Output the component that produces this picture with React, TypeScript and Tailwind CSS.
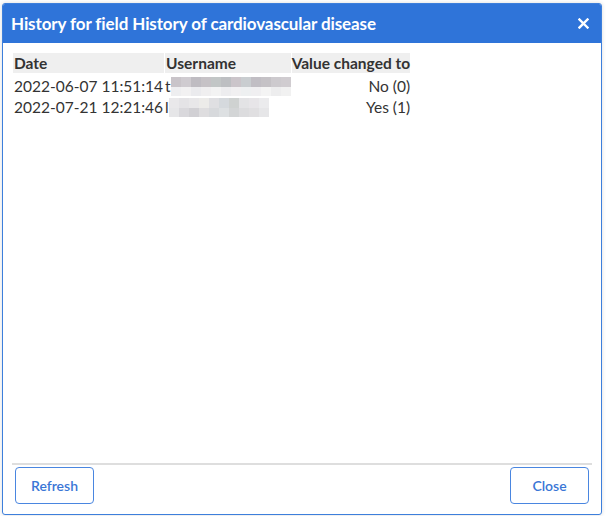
import React from 'react';

const blur1 = ['#c9c4c9', '#cfcbd0', '#bfbcc2', '#c6c2c6', '#c2c6c6', '#bdbfc2', '#cbc5ca', '#c9cdd0', '#c1bec4', '#c5c2c6', '#cdcace', '#d0ccd0'];
const blur1b = ['#eeeef0', '#f2f1f2', '#ebebee', '#f0eff0', '#f3f3f3', '#ededef', '#f1f0f1', '#eef0f1', '#f0eff1', '#f4f4f4', '#ededee', '#f1f1f1'];
const blur2 = ['#e9e8ea', '#e4e3e6', '#e8e7e9', '#ecebe9', '#dfdfe2', '#d5d9dd', '#cfd2d1', '#e3e3e5', '#e7e5e8', '#ebebed'];
const blur2b = ['#e6e6e8', '#d9d8dc', '#d1d0d4', '#dedddf', '#d7d9dc', '#dde0e2', '#d3d5d6', '#dcdcde', '#e0dfe1', '#e6e6e8'];

function Blurred({ top, bottom, lead }: { top: string[]; bottom: string[]; lead: string }) {
  return (
    <div className="flex items-center h-[21px]">
      <span>{lead}</span>
      <div className="flex flex-col">
        <div className="flex">
          {top.map((c, i) => (
            <div key={i} className="w-[10px] h-[10px]" style={{ backgroundColor: c }} />
          ))}
        </div>
        <div className="flex">
          {bottom.map((c, i) => (
            <div key={i} className="w-[10px] h-[9px]" style={{ backgroundColor: c }} />
          ))}
        </div>
      </div>
    </div>
  );
}

export default function App() {
  const rows = [
    { date: '2022-06-07 11:51:14', lead: 't', top: blur1, bottom: blur1b, value: 'No (0)' },
    { date: '2022-07-21 12:21:46', lead: 'l', top: blur2, bottom: blur2b, value: 'Yes (1)' }
  ];

  return (
    <div className="w-[608px] h-[516px] bg-white overflow-hidden pt-[3px] pl-[2px]" style={{ fontFamily: 'Lato, "Open Sans", sans-serif' }}>
      <div className="w-[600px] h-[512px] flex flex-col border border-[#3d7fdc] rounded-[3px] bg-white shadow-[0_0_4px_rgba(0,0,0,0.15)]">
        {/* Header */}
        <div className="h-[39px] bg-[#2f74d9] flex items-center justify-between pl-[8px] pr-[11px] rounded-t-[2px]">
          <h1 className="text-white font-bold text-[17px] tracking-[-0.1px]">
            History for field History of cardiovascular disease
          </h1>
          <svg width="11" height="11" viewBox="0 0 11 11" className="mr-[1px]">
            <path d="M1.5 1.5 L9.5 9.5 M9.5 1.5 L1.5 9.5" stroke="white" strokeWidth="2.4" strokeLinecap="square" />
          </svg>
        </div>

        {/* Body */}
        <div className="flex-1 pl-[9px] pr-[8px] pt-[10px]">
          <table className="border-separate border-spacing-x-[1px] border-spacing-y-0 text-[15.5px] text-[#333] leading-[21px]">
            <thead>
              <tr>
                <th className="bg-[#efefef] font-bold text-left w-[150px] h-[20px] px-[1px] leading-[20px]">Date</th>
                <th className="bg-[#efefef] font-bold text-left w-[124px] h-[20px] px-[1px] leading-[20px]">Username</th>
                <th className="bg-[#efefef] font-bold text-left h-[20px] px-0 leading-[20px] whitespace-nowrap">Value changed to</th>
              </tr>
            </thead>
            <tbody>
              <tr><td className="h-[3px] p-0" colSpan={3} /></tr>
              {rows.map((r, i) => (
                <tr key={i}>
                  <td className="px-[1px] py-0 h-[21px] whitespace-nowrap">{r.date}</td>
                  <td className="p-0">
                    <Blurred lead={r.lead} top={r.top} bottom={r.bottom} />
                  </td>
                  <td className="text-right p-0 whitespace-nowrap">{r.value}</td>
                </tr>
              ))}
            </tbody>
          </table>
        </div>

        {/* Footer */}
        <div className="mx-[9px] border-t-2 border-[#dedede]" />
        <div className="flex justify-between px-[12px] pt-[2px] pb-[10px]">
          <button className="w-[79px] h-[37px] border border-[#4a86e0] rounded-[4px] text-[#3a76d6] text-[14px] font-semibold bg-white">
            Refresh
          </button>
          <button className="w-[79px] h-[37px] border border-[#4a86e0] rounded-[4px] text-[#3a76d6] text-[14px] font-semibold bg-white">
            Close
          </button>
        </div>
      </div>
    </div>
  );
}
